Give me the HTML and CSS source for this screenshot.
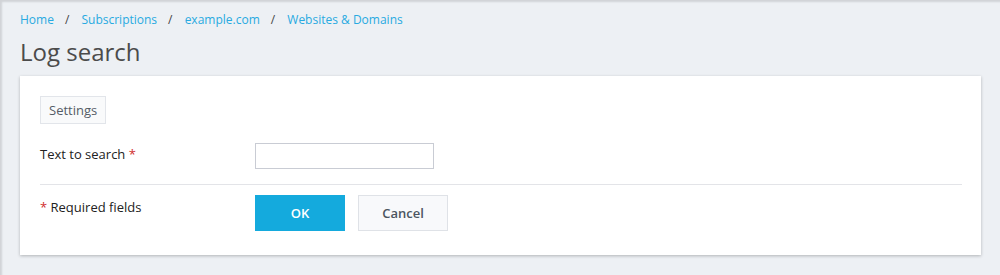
FILE: index.html
```html
<!DOCTYPE html>
<html>
<head>
<meta charset="utf-8">
<link rel="stylesheet" href="styles.css">
</head>
<body>
<div class="page">
  <nav class="crumbs">
    <a href="#">Home</a><span class="sep">/</span>
    <a href="#">Subscriptions</a><span class="sep">/</span>
    <a href="#">example.com</a><span class="sep">/</span>
    <a href="#">Websites &amp; Domains</a>
  </nav>
  <h1 class="title">Log search</h1>
  <div class="card">
    <div class="legend">Settings</div>
    <div class="row field-row">
      <label class="label">Text to search <span class="req">*</span></label>
      <input class="input" type="text">
    </div>
    <div class="divider"></div>
    <div class="row actions">
      <div class="label"><span class="req">*</span> Required fields</div>
      <div class="buttons">
        <button class="btn btn-primary">OK</button>
        <button class="btn btn-default">Cancel</button>
      </div>
    </div>
  </div>
</div>
</body>
</html>
```
FILE: styles.css
```css
html, body {
  margin: 0;
  padding: 0;
  height: 100%;
}
body {
  background: #edf0f4;
  font-family: "Open Sans", "Liberation Sans", sans-serif;
  color: #222;
  box-shadow: inset 2px 2px 2px rgba(0,0,0,0.12);
}
.page {
  padding: 11px 19px 0 20px;
}
.crumbs {
  font-size: 12px;
  line-height: 18px;
  height: 18px;
}
.crumbs a {
  color: #28aae1;
  text-decoration: none;
}
.crumbs .sep {
  color: #444;
  margin: 0 9px 0 11px;
}
.title {
  margin: 6px 0 0 0;
  font-size: 24px;
  font-weight: 400;
  line-height: 34px;
  color: #4b4b4b;
}
.card {
  margin-top: 7px;
  background: #fff;
  box-shadow: 0 1px 3px rgba(0,0,0,0.25);
  padding: 20px 19px 24px 20px;
}
.legend {
  display: inline-block;
  box-sizing: border-box;
  height: 28px;
  padding: 0 8px;
  line-height: 26px;
  border: 1px solid #e2e5ea;
  background: #f9fafb;
  color: #555d66;
  font-size: 13px;
}
.row {
  display: flex;
  align-items: center;
}
.field-row {
  margin-top: 18px;
  height: 27px;
}
.field-row .label {
  margin-bottom: 4px;
}
.label {
  width: 215px;
  font-size: 13px;
  color: #222;
  flex: none;
}
.req {
  color: #d02d2d;
}
.input {
  box-sizing: border-box;
  width: 179px;
  height: 26px;
  border: 1px solid #c9ccd4;
  margin: 0;
  padding: 0 6px;
  outline: none;
}
.divider {
  height: 1px;
  background: #e3e4e8;
  margin-top: 15px;
}
.actions {
  margin-top: 10px;
  align-items: flex-start;
}
.actions .label {
  line-height: 24px;
}
.buttons {
  display: flex;
  gap: 13px;
}
.btn {
  box-sizing: border-box;
  width: 90px;
  height: 36px;
  font-family: "Open Sans", "Liberation Sans", sans-serif;
  font-size: 13px;
  font-weight: 600;
  margin: 0;
  cursor: pointer;
}
.btn-primary {
  background: #14aadd;
  color: #fff;
  border: none;
}
.btn-default {
  background: #f8f9fb;
  color: #4b5560;
  border: 1px solid #dfe2e7;
}
```
